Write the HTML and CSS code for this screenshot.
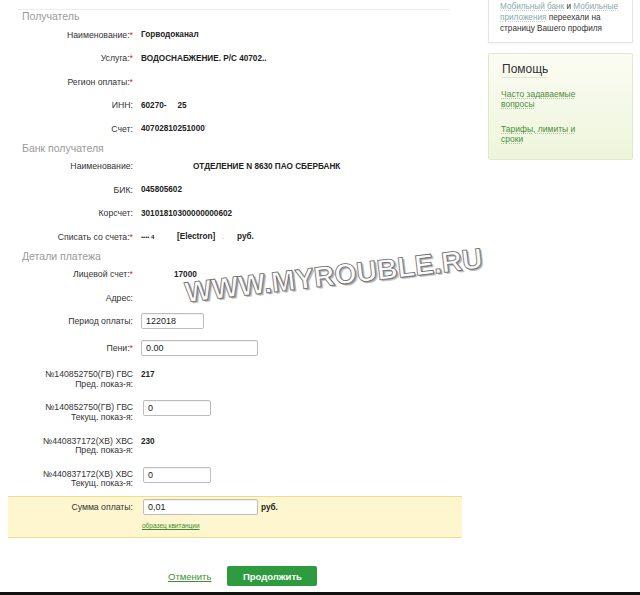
FILE: index.html
```html
<!DOCTYPE html>
<html lang="ru">
<head>
    <meta charset="UTF-8">
    <title>Оплата услуг</title>
    <link rel="stylesheet" href="styles.css">
</head>
<body>
    <div class="page">
        <main class="form">
            <div class="section-title first">Получатель</div>
            <div class="row">
                <span class="label">Наименование:<span class="req">*</span></span>
                <span class="value">Горводоканал</span>
            </div>
            <div class="row">
                <span class="label">Услуга:<span class="req">*</span></span>
                <span class="value">ВОДОСНАБЖЕНИЕ. Р/С 40702..</span>
            </div>
            <div class="row">
                <span class="label">Регион оплаты:<span class="req">*</span></span>
                <span class="value"></span>
            </div>
            <div class="row">
                <span class="label">ИНН:</span>
                <span class="value">60270-<span class="gap-11">25</span></span>
            </div>
            <div class="row">
                <span class="label">Счет:</span>
                <span class="value">40702810251000<span class="faint">'</span></span>
            </div>

            <div class="section-title">Банк получателя</div>
            <div class="row">
                <span class="label">Наименование:</span>
                <span class="value bank">ОТДЕЛЕНИЕ N 8630 ПАО СБЕРБАНК</span>
            </div>
            <div class="row">
                <span class="label">БИК:</span>
                <span class="value">045805602</span>
            </div>
            <div class="row">
                <span class="label">Корсчет:</span>
                <span class="value">30101810300000000602</span>
            </div>
            <div class="row">
                <span class="label">Списать со счета:<span class="req">*</span></span>
                <span class="value card">
                    <span class="mask">•••• 4</span>
                    <span class="card-type">[Electron]</span>
                    <span class="faint dot">.</span>
                    <span class="cur">руб.</span>
                </span>
            </div>

            <div class="section-title">Детали платежа</div>
            <div class="row">
                <span class="label">Лицевой счет:<span class="req">*</span></span>
                <span class="value account">17000</span>
            </div>
            <div class="row">
                <span class="label">Адрес:</span>
                <span class="value"></span>
            </div>
            <div class="row">
                <span class="label">Период оплаты:</span>
                <span class="value"><input class="field w-short" type="text" value="122018"></span>
            </div>
            <div class="row tall">
                <span class="label">Пени:<span class="req">*</span></span>
                <span class="value"><input class="field w-long" type="text" value="0.00"></span>
            </div>
            <div class="row meter">
                <span class="label">№140852750(ГВ) ГВС<br>Пред. показ-я:</span>
                <span class="value">217</span>
            </div>
            <div class="row meter">
                <span class="label">№140852750(ГВ) ГВС<br>Текущ. показ-я:</span>
                <span class="value"><input class="field w-mid" type="text" value="0"></span>
            </div>
            <div class="row meter">
                <span class="label">№440837172(ХВ) ХВС<br>Пред. показ-я:</span>
                <span class="value">230</span>
            </div>
            <div class="row meter">
                <span class="label">№440837172(ХВ) ХВС<br>Текущ. показ-я:</span>
                <span class="value"><input class="field w-mid" type="text" value="0"></span>
            </div>

            <div class="total">
                <div class="row">
                    <span class="label">Сумма оплаты:</span>
                    <span class="value"><input class="field w-sum" type="text" value="0,01"><span class="cur">руб.</span></span>
                </div>
                <a class="sample" href="#">образец квитанции</a>
            </div>

            <div class="actions">
                <a class="cancel" href="#">Отменить</a>
                <button class="btn" type="button">Продолжить</button>
            </div>
        </main>

        <aside class="sidebar">
            <div class="notice">
                <a href="#">Мобильный банк</a> и <a href="#">Мобильные приложения</a> переехали на страницу Вашего профиля
            </div>
            <div class="help">
                <h3>Помощь</h3>
                <a href="#">Часто задаваемые<br>вопросы</a>
                <a class="second" href="#">Тарифы, лимиты и<br>сроки</a>
            </div>
        </aside>
    </div>

    <div class="bottom-bar"></div>

    <div class="watermark">WWW.MYROUBLE.RU</div>
</body>
</html>
```

FILE: styles.css
```css
* {
    margin: 0;
    padding: 0;
    box-sizing: border-box;
}

body {
    font-family: "Liberation Sans", Arial, sans-serif;
    color: #333;
    background: #fff;
    height: 595px;
    overflow: hidden;
    position: relative;
}

.page {
    display: flex;
    align-items: flex-start;
    height: 589px;
}

/* main form column */
.form {
    width: 454px;
    margin-left: 8px;
    padding-top: 9px;
}

.section-title {
    height: 14px;
    line-height: 14px;
    padding-left: 14px;
    font-size: 10.5px;
    color: #9a9a9a;
}

.section-title.first {
    margin: 0 12px 0 10px;
    padding-left: 4px;
    border-top: 1px solid #ececec;
    line-height: 13px;
}

.row {
    display: grid;
    grid-template-columns: 125px 1fr;
    column-gap: 8px;
    align-items: center;
    height: 23.5px;
}

.row.tall {
    height: 30px;
}

.row.meter {
    height: 33.3px;
    align-items: start;
    padding-top: 7px;
}

.label {
    text-align: right;
    font-size: 8.7px;
    color: #333;
    white-space: nowrap;
}

.meter .label {
    line-height: 9.5px;
}

.req {
    color: #e0262b;
}

.value {
    font-size: 8.2px;
    font-weight: bold;
    color: #222;
    white-space: nowrap;
}

.meter .value {
    display: flex;
    align-items: center;
    height: 9.5px;
}

.gap-11 {
    margin-left: 11px;
}

.faint {
    color: #bbb;
    font-weight: normal;
}

.bank {
    padding-left: 52px;
}

.card {
    display: flex;
    align-items: center;
}

.mask {
    font-size: 6px;
    width: 36px;
}

.card-type {
    width: 45px;
}

.dot {
    width: 15px;
}

.account {
    padding-left: 33px;
}

.field {
    height: 16px;
    border: 1px solid #bdbdbd;
    border-radius: 2px;
    padding: 0 4px;
    font-family: "Liberation Sans", Arial, sans-serif;
    font-size: 9px;
    color: #222;
    background: #fff;
    box-shadow: inset 0 1px 1px rgba(0, 0, 0, 0.06);
}

.w-short {
    width: 63px;
}

.w-long {
    width: 117px;
}

.w-mid {
    width: 68px;
    margin-left: 2px;
}

.w-sum {
    width: 115px;
    margin-left: 2px;
}

.total {
    height: 42px;
    background: #fdf6cf;
    border-top: 1px solid #eedd8a;
    border-bottom: 1px solid #eedd8a;
}

.total .row {
    height: 20px;
}

.total .value {
    display: flex;
    align-items: center;
}

.total .cur {
    margin-left: 3px;
}

.sample {
    display: block;
    padding-left: 134px;
    line-height: 18px;
    font-size: 6.5px;
    color: #3f8c2f;
    text-decoration: underline;
}

.actions {
    display: flex;
    align-items: center;
    gap: 16px;
    padding-left: 160px;
    margin-top: 28px;
}

.cancel {
    font-size: 9.5px;
    color: #3f8f3a;
    text-decoration: underline;
}

.btn {
    width: 90px;
    height: 20px;
    border: none;
    border-radius: 2px;
    background: #2e9b3f;
    color: #fff;
    font-family: "Liberation Sans", Arial, sans-serif;
    font-size: 9.5px;
    font-weight: bold;
}

/* right column */
.sidebar {
    width: 145px;
    margin-left: 26px;
}

.notice {
    border: 1px solid #e4e4e4;
    border-top: none;
    padding: 1px 4px 8px 11px;
    font-size: 8.2px;
    line-height: 11px;
    color: #333;
    box-shadow: 0 1px 2px rgba(0, 0, 0, 0.05);
}

.notice a {
    color: #88a8ab;
    text-decoration: underline dotted #c3d3d3;
}

.help {
    height: 107px;
    margin-top: 10px;
    padding: 5px 12px 0 12px;
    border: 1px solid #e1e8c9;
    border-radius: 2px;
    background: linear-gradient(#fbfcf3, #eef5db);
}

.help h3 {
    display: inline-block;
    padding-left: 1px;
    font-size: 12px;
    font-weight: normal;
    line-height: 16px;
    color: #333;
    border-bottom: 1px solid #e3e7d6;
}

.help a {
    display: block;
    margin-top: 11px;
    font-size: 8.5px;
    line-height: 10px;
    color: #4b8b3b;
    text-decoration: underline dotted #a9c79c;
}

.help a.second {
    margin-top: 15px;
}

.bottom-bar {
    height: 6px;
    margin-top: 3px;
    background: #111;
}

/* overlay stamp */
.watermark {
    position: absolute;
    left: 184px;
    top: 261px;
    font-size: 28.5px;
    line-height: 1;
    font-weight: bold;
    color: #fbfbfb;
    -webkit-text-stroke: 0.8px #6d6d6d;
    text-shadow: 1px 1px 0 #9a9a9a, 2px 2px 0 #c4c4c4;
    transform: rotate(-6.6deg);
    white-space: nowrap;
}
```
